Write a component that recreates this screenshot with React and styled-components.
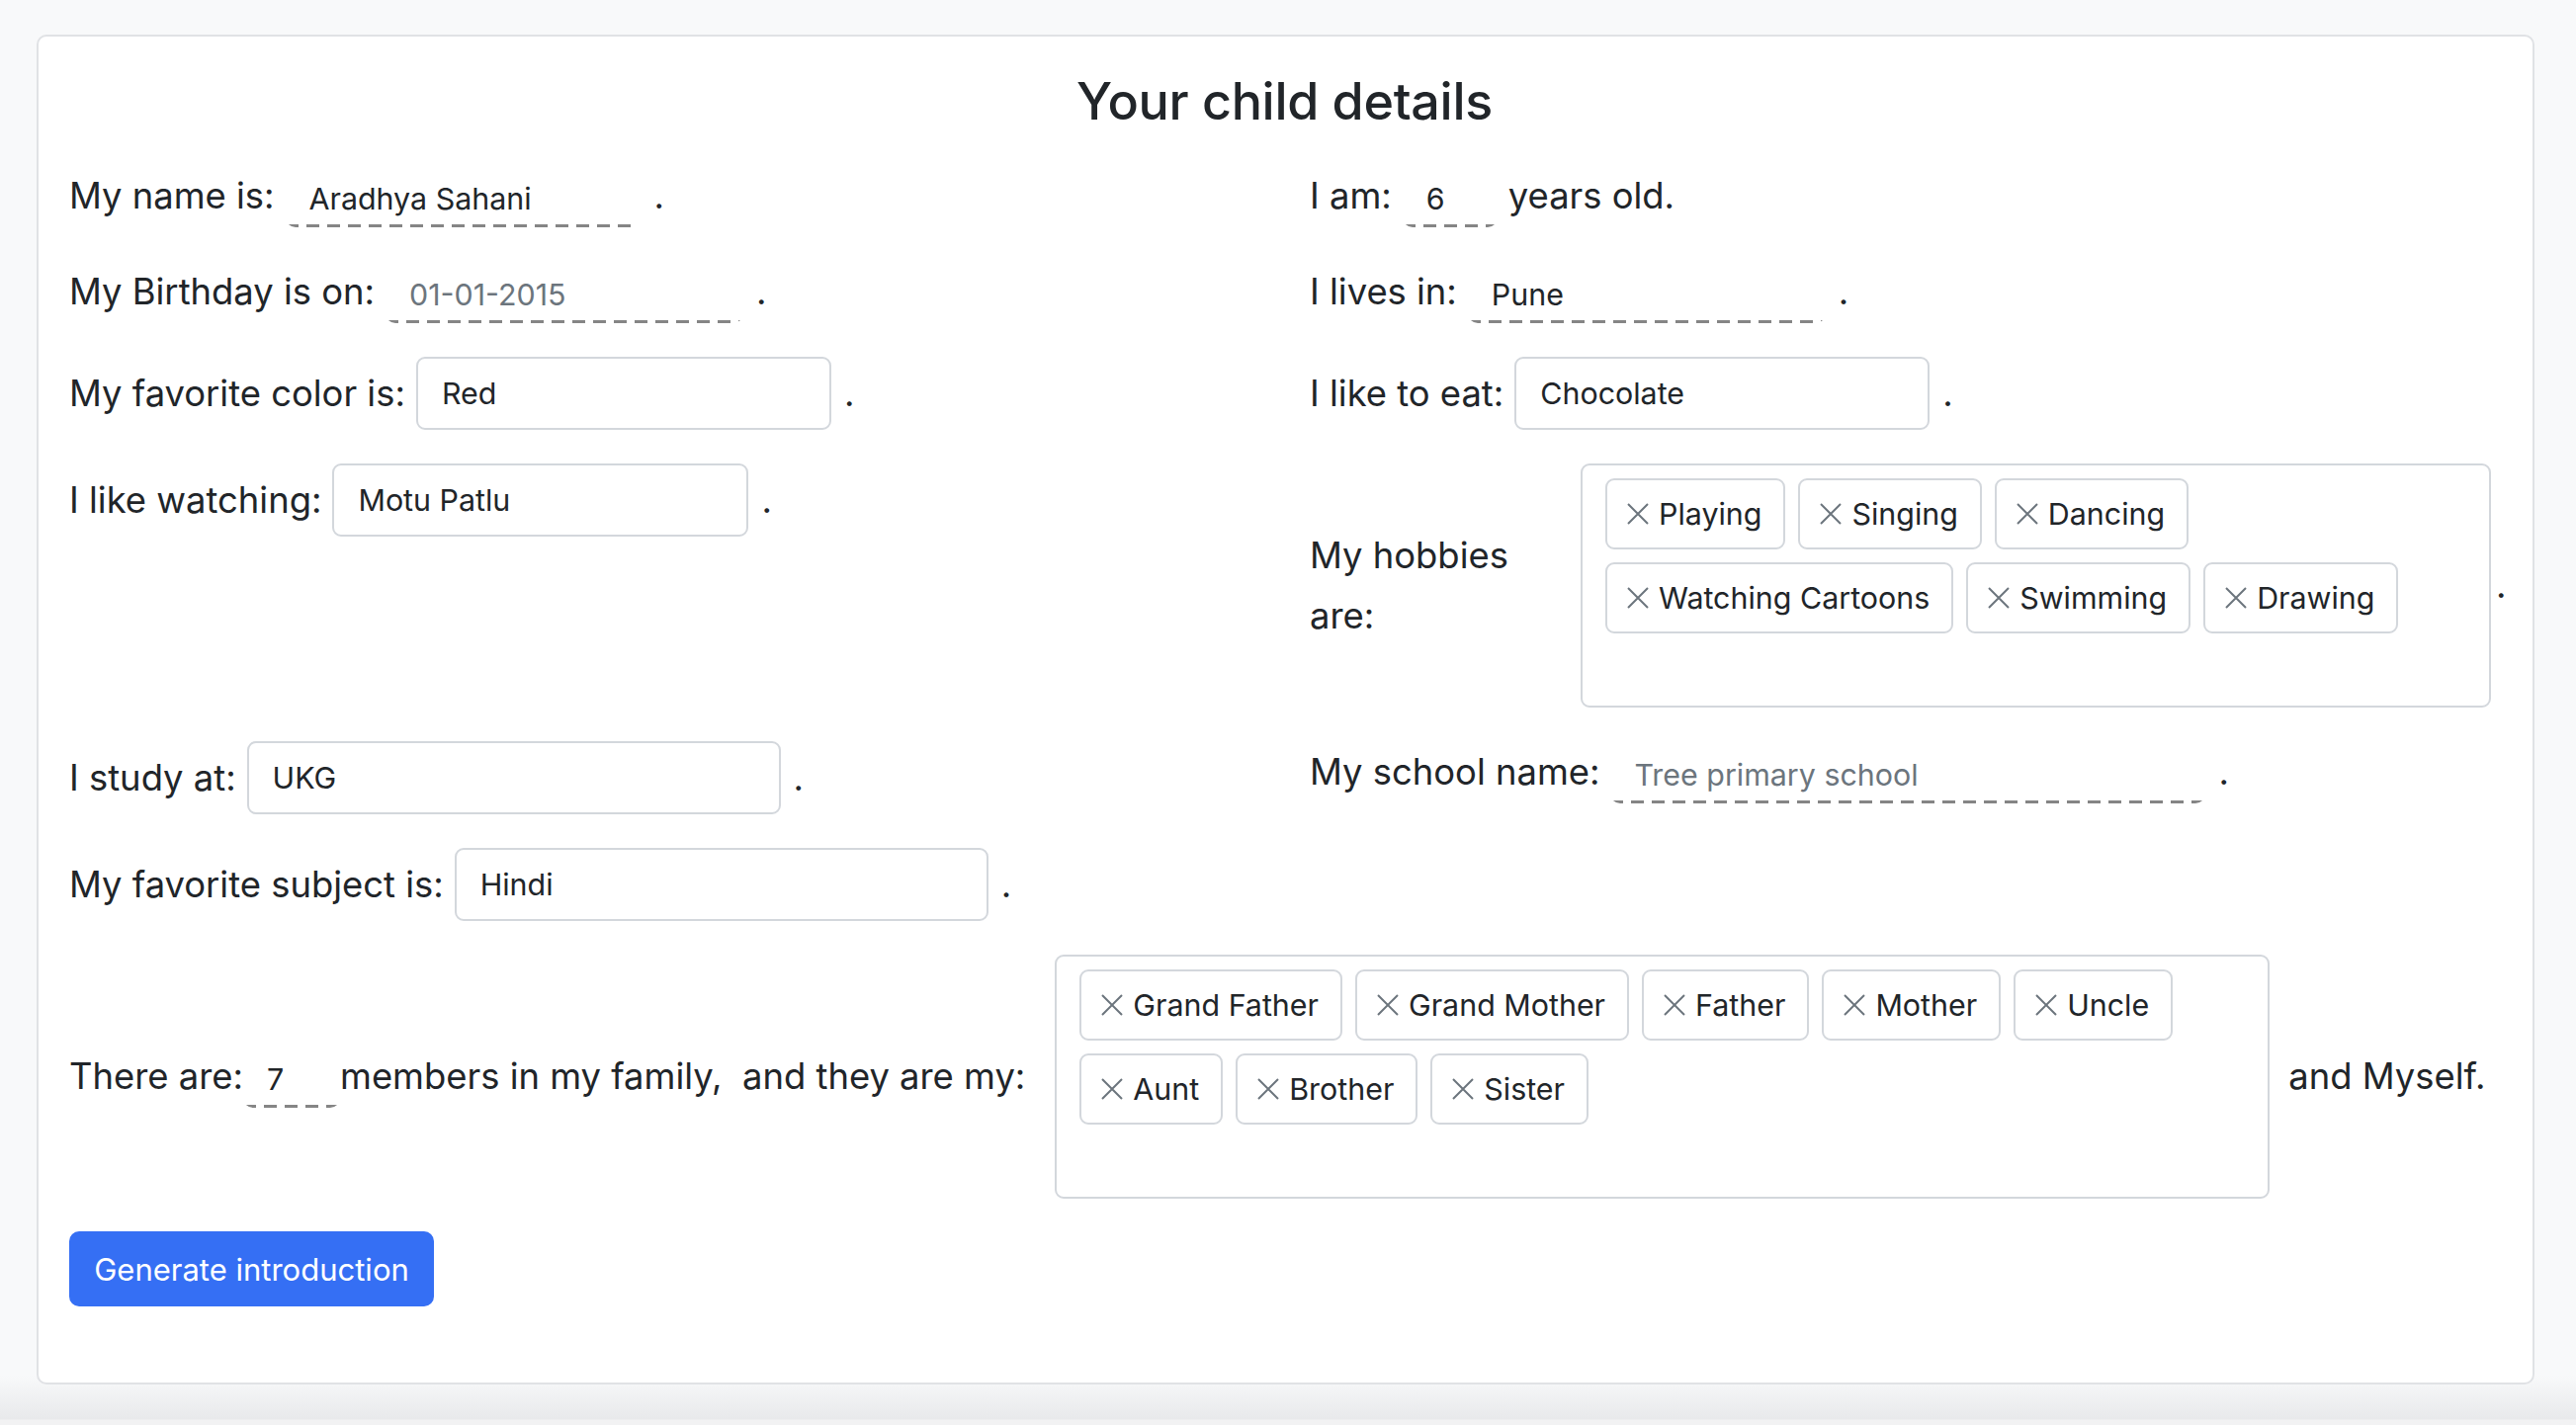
import styled, { createGlobalStyle } from 'styled-components';

const GlobalStyle = createGlobalStyle`
  * { box-sizing: border-box; }
  html, body { margin: 0; padding: 0; }
  body {
    min-height: 1442px;
    background: linear-gradient(to bottom, #f8f9fa 0, #f8f9fa 1392px, #e8e9eb 1436px, #f2f2f3 1437px, #f2f2f3 100%);
    font-family: Inter, "Noto Sans", "Liberation Sans", sans-serif;
    color: #212529;
  }
`;

const hobbies = ['Playing', 'Singing', 'Dancing', 'Watching Cartoons', 'Swimming', 'Drawing'];
const family = ['Grand Father', 'Grand Mother', 'Father', 'Mother', 'Uncle', 'Aunt', 'Brother', 'Sister'];

const XIcon = () => (
  <svg width="24" height="24" viewBox="0 0 24 24" fill="none">
    <path d="M2 2L22 22M22 2L2 22" stroke="#6c757d" strokeWidth="2" />
  </svg>
);

const App = () => {
  return (
    <Page>
      <GlobalStyle />
      <Card>
        <Title>Your child details</Title>
        <Grid>
          <Line>
            <Label>My name is:</Label>
            <DashedInput $w={360} defaultValue="Aradhya Sahani" />
            <Dot>.</Dot>
          </Line>
          <Line>
            <Label>I am:</Label>
            <DashedInput $w={96} defaultValue="6" />
            <Label>years old.</Label>
          </Line>

          <Line>
            <Label>My Birthday is on:</Label>
            <DashedInput $w={362} placeholder="01-01-2015" />
            <Dot>.</Dot>
          </Line>
          <Line>
            <Label>I lives in:</Label>
            <DashedInput $w={362} defaultValue="Pune" />
            <Dot>.</Dot>
          </Line>

          <Line>
            <Label>My favorite color is:</Label>
            <BoxInput $w={420} defaultValue="Red" />
            <Dot>.</Dot>
          </Line>
          <Line>
            <Label>I like to eat:</Label>
            <BoxInput $w={420} defaultValue="Chocolate" />
            <Dot>.</Dot>
          </Line>

          <Line>
            <Label>I like watching:</Label>
            <BoxInput $w={421} defaultValue="Motu Patlu" />
            <Dot>.</Dot>
          </Line>
          <Line $gap={3}>
            <SideLabel>My hobbies are:</SideLabel>
            <TagBox $w={921}>
              {hobbies.map((h) => (
                <Chip key={h}><XIcon />{h}</Chip>
              ))}
              <TagInput />
            </TagBox>
            <Dot>.</Dot>
          </Line>

          <Line>
            <Label>I study at:</Label>
            <BoxInput $w={540} defaultValue="UKG" />
            <Dot>.</Dot>
          </Line>
          <Line>
            <Label>My school name:</Label>
            <DashedInput $w={602} placeholder="Tree primary school" />
            <Dot>.</Dot>
          </Line>

          <Line>
            <Label>My favorite subject is:</Label>
            <BoxInput $w={540} defaultValue="Hindi" />
            <Dot>.</Dot>
          </Line>
          <div />

          <FamilyLine>
            <Label>There are:</Label>
            <DashedInput $w={98} defaultValue="7" />
            <Label>members in my family,&nbsp; and they are my:</Label>
            <TagBox $w={1229} $side>
              {family.map((f) => (
                <Chip key={f}><XIcon />{f}</Chip>
              ))}
              <TagInput />
            </TagBox>
            <Label>and Myself.</Label>
          </FamilyLine>
        </Grid>
        <Button type="button">Generate introduction</Button>
      </Card>
    </Page>
  );
};

const Page = styled.div`
  height: 1442px;
  padding: 35px 42px 0 37px;
`;

const Card = styled.form`
  height: 1366px;
  background: #fff;
  border: 2px solid #e0e2e5;
  border-radius: 10px;
  padding: 33px 33px 77px 31px;
  display: flex;
  flex-direction: column;
`;

const Title = styled.h2`
  margin: 0 0 32px;
  text-align: center;
  font-size: 52px;
  font-weight: 500;
  line-height: 65px;
  letter-spacing: -0.3px;
`;

const Grid = styled.div`
  display: grid;
  grid-template-columns: 1205px minmax(0, 1fr);
  column-gap: 50px;
  row-gap: 34px;
  align-items: start;
`;

const Line = styled.div`
  display: flex;
  align-items: center;
  gap: ${({ $gap }) => ($gap ?? 11)}px;
  font-size: 36.4px;
  line-height: 1.5;
`;

const FamilyLine = styled(Line)`
  grid-column: 1 / -1;
  gap: 0;
`;

const Label = styled.span`
  white-space: nowrap;
`;

const SideLabel = styled.span`
  width: 263px;
  flex: none;
  margin-right: 8px;
  line-height: 1.66;
`;

const Dot = styled.span`
  padding-left: 2px;
`;

const DashedInput = styled.input`
  width: ${({ $w }) => $w}px;
  height: 63px;
  padding: 4px 24px 0;
  border: none;
  border-radius: 10px;
  background-color: transparent;
  background-image: repeating-linear-gradient(to right, #858585 0 13px, transparent 13px 21px);
  background-size: 100% 3px;
  background-position: left bottom;
  background-repeat: no-repeat;
  font-family: inherit;
  font-size: 30.4px;
  color: #212529;
  outline: none;
  &::placeholder { color: #6c757d; }
`;

const BoxInput = styled.input`
  width: ${({ $w }) => $w}px;
  height: 74px;
  padding: 0 24px;
  border: 2px solid #d3d7dc;
  border-radius: 9px;
  background: #fff;
  font-family: inherit;
  font-size: 30.4px;
  color: #212529;
  outline: none;
`;

const TagBox = styled.div`
  width: ${({ $w }) => $w}px;
  flex: none;
  margin: ${({ $side }) => ($side ? '0 19px 0 30px' : '0')};
  border: 2px solid #d3d7dc;
  border-radius: 9px;
  padding: 13px 23px;
  display: flex;
  flex-wrap: wrap;
  align-content: flex-start;
  gap: 13px;
`;

const Chip = styled.span`
  display: inline-flex;
  align-items: center;
  gap: 9px;
  height: 72px;
  padding: 0 22px 0 19px;
  border: 2px solid #d3d7dc;
  border-radius: 9px;
  font-size: 30.4px;
  line-height: 1;
  white-space: nowrap;
`;

const TagInput = styled.input`
  flex-basis: 100%;
  height: 47px;
  border: none;
  outline: none;
  background: transparent;
`;

const Button = styled.button`
  align-self: flex-start;
  margin-top: 33px;
  width: 369px;
  height: 76px;
  border: none;
  border-radius: 10px;
  background: #356ff4;
  color: #fff;
  font-family: inherit;
  font-size: 31px;
`;

export default App;
